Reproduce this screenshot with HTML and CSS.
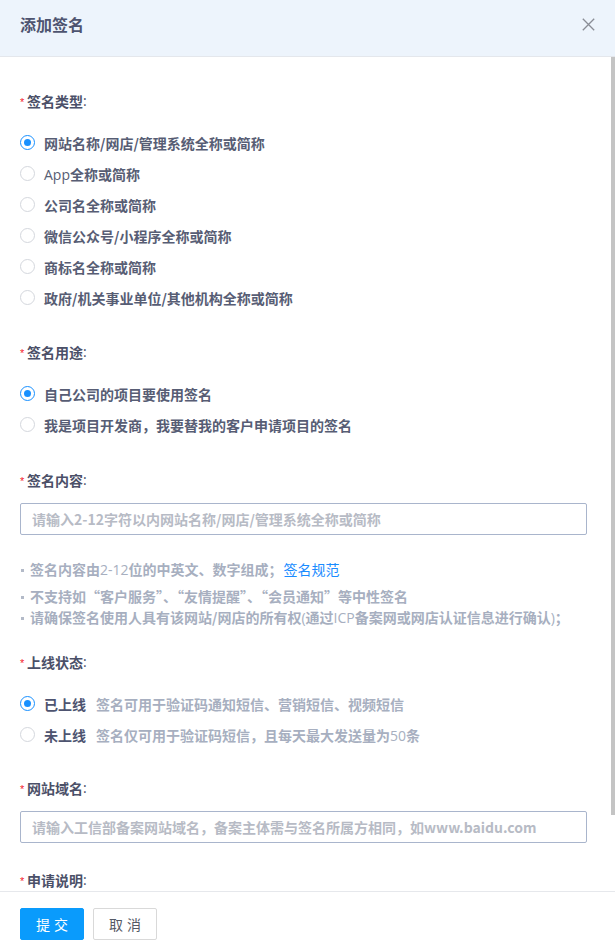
FILE: index.html
```html
<!DOCTYPE html>
<html lang="zh-CN">
<head>
<meta charset="utf-8">
<title>添加签名</title>
<link rel="stylesheet" href="styles.css">
</head>
<body>
<div class="dialog">
  <header class="dlg-head">
    <h2 class="dlg-title">添加签名</h2>
    <button class="dlg-close" type="button" aria-label="关闭">
      <svg width="13" height="13" viewBox="0 0 13 13"><path d="M0.8 0.8 L12.2 12.2 M12.2 0.8 L0.8 12.2" stroke="#8a8d96" stroke-width="1.3" fill="none"/></svg>
    </button>
  </header>

  <div class="dlg-body">
    <div class="field f1">
      <div class="label"><span class="req">*</span>签名类型<span class="en">:</span></div>
      <div class="radios">
        <label class="radio checked"><span class="dot"></span><span class="rtext">网站名称/网店/管理系统全称或简称</span></label>
        <label class="radio"><span class="dot"></span><span class="rtext"><span class="en">App</span>全称或简称</span></label>
        <label class="radio"><span class="dot"></span><span class="rtext">公司名全称或简称</span></label>
        <label class="radio"><span class="dot"></span><span class="rtext">微信公众号/小程序全称或简称</span></label>
        <label class="radio"><span class="dot"></span><span class="rtext">商标名全称或简称</span></label>
        <label class="radio"><span class="dot"></span><span class="rtext">政府/机关事业单位/其他机构全称或简称</span></label>
      </div>
    </div>

    <div class="field f2">
      <div class="label"><span class="req">*</span>签名用途<span class="en">:</span></div>
      <div class="radios">
        <label class="radio checked"><span class="dot"></span><span class="rtext">自己公司的项目要使用签名</span></label>
        <label class="radio"><span class="dot"></span><span class="rtext">我是项目开发商，我要替我的客户申请项目的签名</span></label>
      </div>
    </div>

    <div class="field f3">
      <div class="label"><span class="req">*</span>签名内容<span class="en">:</span></div>
      <input class="text-input" type="text" placeholder="请输入2-12字符以内网站名称/网店/管理系统全称或简称">
      <ul class="hints">
        <li class="hint first">签名内容由<span class="en">2-12</span>位的中英文、数字组成；<a class="link" href="#">签名规范</a></li>
        <li class="hint">不支持如“客户服务”、“友情提醒”、“会员通知”等中性签名</li>
        <li class="hint">请确保签名使用人具有该网站/网店的所有权<span class="en">(</span>通过<span class="en">ICP</span>备案网或网店认证信息进行确认<span class="en">)</span>；</li>
      </ul>
    </div>

    <div class="field f4">
      <div class="label"><span class="req">*</span>上线状态<span class="en">:</span></div>
      <div class="radios">
        <label class="radio checked"><span class="dot"></span><span class="rtext strong">已上线</span><span class="desc">签名可用于验证码通知短信、营销短信、视频短信</span></label>
        <label class="radio"><span class="dot"></span><span class="rtext strong">未上线</span><span class="desc">签名仅可用于验证码短信，且每天最大发送量为<span class="en">50</span>条</span></label>
      </div>
    </div>

    <div class="field f5">
      <div class="label"><span class="req">*</span>网站域名<span class="en">:</span></div>
      <input class="text-input" type="text" placeholder="请输入工信部备案网站域名，备案主体需与签名所属方相同，如www.baidu.com">
    </div>

    <div class="field f6">
      <div class="label"><span class="req">*</span>申请说明<span class="en">:</span></div>
      <textarea class="text-area"></textarea>
    </div>
  </div>

  <div class="scroll-thumb"></div>

  <footer class="dlg-foot">
    <button class="btn btn-primary" type="button">提交</button>
    <button class="btn btn-default" type="button">取消</button>
  </footer>
</div>
</body>
</html>
```

FILE: styles.css
```css
html, body {
  margin: 0;
  padding: 0;
  height: 100%;
  overflow: hidden;
  background: #ffffff;
}

body {
  font-family: "Noto Sans CJK SC", "Open Sans", sans-serif;
  font-size: 14px;
  color: #4b5068;
}

.dialog {
  position: relative;
  height: 945px;
  display: flex;
  flex-direction: column;
  background: #fff;
}

.dlg-head {
  flex: none;
  height: 56px;
  box-sizing: content-box;
  border-bottom: 1px solid #e4e7ec;
  background: #edf4fc;
  display: flex;
  align-items: flex-start;
  justify-content: space-between;
  padding: 0 20px;
}

.dlg-title {
  margin: 14px 0 0;
  font-size: 16px;
  line-height: 20px;
  font-weight: 700;
  color: #4e5470;
}

.dlg-close {
  margin: 17px 0 0 0;
  padding: 0;
  border: 0;
  background: transparent;
  width: 14px;
  height: 14px;
  display: flex;
  align-items: center;
  justify-content: center;
}

.dlg-body {
  flex: 1;
  min-height: 0;
  overflow-y: hidden;
  padding: 34px 28px 0 20px;
}

.scroll-thumb {
  position: absolute;
  right: 0;
  top: 57px;
  width: 4px;
  height: 758px;
  background: #c4c4c4;
}

.en {
  font-family: "Open Sans", "Liberation Sans", sans-serif;
  font-weight: 400;
}

.label {
  height: 20px;
  line-height: 20px;
  font-weight: 700;
  color: #4b5068;
  display: flex;
  align-items: center;
}

.req {
  color: #f5222d;
  font-family: "Liberation Sans", sans-serif;
  font-size: 11px;
  font-weight: 400;
  width: 7px;
  margin-top: 1px;
}

.f2 { margin-top: 29px; }
.f3 { margin-top: 30px; }
.f4 { margin-top: 24px; }
.f5 { margin-top: 28px; }
.f6 { margin-top: 27px; }

.radios {
  margin-top: 16px;
  display: flex;
  flex-direction: column;
}

.radio {
  height: 31px;
  display: flex;
  align-items: center;
  color: #575d74;
  font-weight: 700;
}

.dot {
  width: 15px;
  height: 15px;
  box-sizing: border-box;
  border: 1px solid #d4d7dd;
  border-radius: 50%;
  margin-right: 9px;
  position: relative;
  flex: none;
}

.radio.checked .dot {
  border: 1.5px solid #1890ff;
}

.radio.checked .dot::after {
  content: "";
  position: absolute;
  left: 50%;
  top: 50%;
  width: 7px;
  height: 7px;
  margin: -3.5px 0 0 -3.5px;
  border-radius: 50%;
  background: #1890ff;
}

.rtext.strong {
  color: #4e5470;
}

.desc {
  margin-left: 10px;
  color: #a7afc0;
}

.text-input {
  display: block;
  width: 100%;
  box-sizing: border-box;
  height: 32px;
  margin: 13px 0 0;
  padding: 0 11px;
  border: 1px solid #a9b5cc;
  border-radius: 2px;
  font-family: "Noto Sans CJK SC", "Open Sans", sans-serif;
  font-size: 14px;
  font-weight: 700;
  color: #4b5068;
  outline: none;
}

.text-input::placeholder {
  color: #b7bbc5;
}

.text-area {
  display: block;
  width: 100%;
  box-sizing: border-box;
  height: 72px;
  margin: 13px 0 0;
  border: 1px solid #a9b5cc;
  border-radius: 2px;
  resize: none;
  outline: none;
}

.hints {
  list-style: none;
  margin: 24px 0 0;
  padding: 0;
}

.hint {
  line-height: 21px;
  color: #a7afc0;
  font-weight: 700;
  position: relative;
  padding-left: 10px;
}

.hint::before {
  content: "";
  position: absolute;
  left: 1px;
  top: 10px;
  width: 3px;
  height: 3px;
  background: #b3bac8;
}

.hint.first {
  margin-bottom: 6px;
}

.link {
  margin-left: 1px;
  color: #1a8cff;
  font-weight: 400;
  text-decoration: none;
}

.dlg-foot {
  flex: none;
  height: 54px;
  box-sizing: border-box;
  border-top: 1px solid #e6e8ec;
  padding: 16px 20px 0;
  display: flex;
  gap: 9px;
  background: #fff;
}

.btn {
  width: 64px;
  height: 32px;
  border-radius: 2px;
  font-family: "Noto Sans CJK SC", sans-serif;
  font-size: 14px;
  letter-spacing: 4px;
  text-indent: 4px;
  padding: 0;
  cursor: pointer;
}

.btn-primary {
  background: #0a9bfc;
  border: 1px solid #0a9bfc;
  color: #fff;
}

.btn-default {
  background: #fff;
  border: 1px solid #d9d9d9;
  color: #555a66;
}
```
